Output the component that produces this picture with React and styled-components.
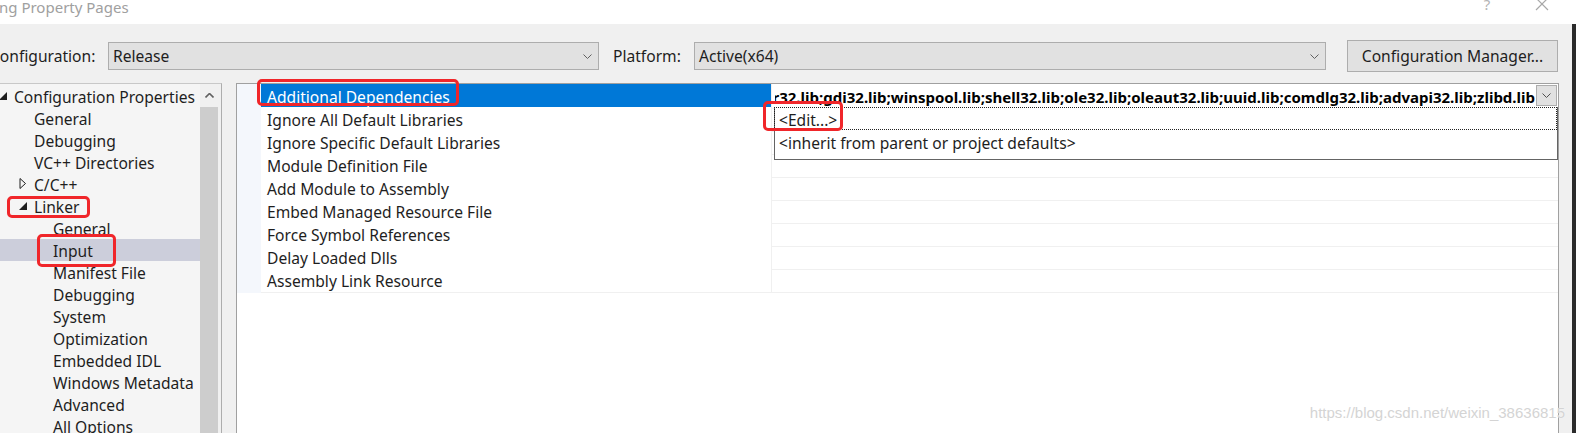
import React from 'react'
import styled, { createGlobalStyle } from 'styled-components'

const GlobalStyle = createGlobalStyle`
  html, body {
    margin: 0;
    padding: 0;
    background: #f0f0f0;
  }
  body {
    font-family: "Noto Sans", "Segoe UI", sans-serif;
  }
  * {
    box-sizing: border-box;
  }
`

const Window = styled.div`
  position: relative;
  width: 1576px;
  height: 433px;
  overflow: hidden;
  display: flex;
  flex-direction: column;
  background: #f0f0f0;
  color: #1e1e1e;
  font-size: 15.6px;
`

const TitleBar = styled.div`
  height: 24px;
  flex-shrink: 0;
  display: flex;
  align-items: flex-start;
  background: #fff;
  color: #a0a0a0;
`

const Title = styled.div`
  flex: 1;
  margin: -2px 0 0 -1px;
  font-size: 15px;
  line-height: 18px;
`

const HelpGlyph = styled.div`
  width: 14px;
  margin: -4px 41px 0 0;
  font-size: 15px;
  line-height: 16px;
  text-align: center;
  color: #b4b4b4;
`

const CloseGlyph = styled.svg`
  margin: -3px 27px 0 0;
`

const Body = styled.div`
  flex: 1;
  display: flex;
  flex-direction: column;
  border-right: 4px solid #2b2b2b;
  min-height: 0;
`

const ConfigRow = styled.div`
  height: 32px;
  margin-top: 16px;
  display: flex;
  align-items: center;
  flex-shrink: 0;
`

const Label = styled.div`
  width: ${p => p.$w}px;
  margin-left: ${p => p.$ml}px;
  line-height: 20px;
`

const Select = styled.div`
  width: ${p => p.$w}px;
  height: 28px;
  display: flex;
  align-items: center;
  justify-content: space-between;
  padding: 0 6px 0 4px;
  background: #e1e1e1;
  border: 1px solid #adadad;
`

const Button = styled.div`
  width: 211px;
  height: 32px;
  margin-left: 21px;
  display: flex;
  align-items: center;
  justify-content: center;
  background: #e1e1e1;
  border: 1px solid #adadad;
`

const Main = styled.div`
  height: 362px;
  margin-top: 11px;
  display: flex;
  flex-shrink: 0;
`

const TreePanel = styled.div`
  width: 222px;
  display: flex;
  background: #f0f0f0;
  border-top: 1px solid #c8c8c8;
  border-right: 1px solid #adadad;
`

const TreeList = styled.div`
  width: 200px;
  padding-top: 1px;
  background: #f5f5f5;
`

const TreeRow = styled.div`
  position: relative;
  height: 22px;
  display: flex;
  align-items: center;
  padding-top: 2px;
  padding-left: ${p => p.$level * 19}px;
  background: ${p => (p.$selected ? '#cccedb' : 'transparent')};
  white-space: nowrap;
`

const Expander = styled.div`
  width: 15px;
  height: 20px;
  flex-shrink: 0;
  display: flex;
  align-items: center;
  margin-top: -3px;
  margin-left: ${p => (p.$root ? -1 : 0)}px;
`

const ScrollBar = styled.div`
  width: 19px;
  display: flex;
  flex-direction: column;
  background: #f0f0f0;
`

const ScrollArrow = styled.div`
  height: 23px;
  display: flex;
  align-items: center;
  justify-content: center;
`

const ScrollThumb = styled.div`
  flex: 1;
  margin: 0 1px 0 0;
  background: #cdcdcd;
`

const GridPanel = styled.div`
  width: 1323px;
  margin-left: 14px;
  background: #fff;
  border: 1px solid #a0a0a0;
`

const PropRow = styled.div`
  display: grid;
  grid-template-columns: 24px 510px 787px;
  height: 23px;
`

const MarginCell = styled.div`
  background: #f4f7fc;
`

const NameCell = styled.div`
  position: relative;
  display: flex;
  align-items: center;
  padding: 2px 0 0 6px;
  white-space: nowrap;
  background: ${p => (p.$selected ? '#0078d7' : '#fff')};
  color: ${p => (p.$selected ? '#fff' : '#1e1e1e')};
  border-bottom: 1px solid ${p => (p.$selected ? '#0078d7' : '#f0f0f0')};
`

const ValueCell = styled.div`
  position: relative;
  border-left: 1px solid #f0f0f0;
  border-bottom: 1px solid #f0f0f0;
`

const ValueField = styled.div`
  height: 22px;
  display: flex;
  align-items: center;
  padding: 1px 0 0 3px;
`

const ValueText = styled.div`
  flex: 1;
  overflow: hidden;
  display: flex;
  justify-content: flex-end;
  white-space: nowrap;
  font-size: 15px;
  font-weight: 700;
  color: #000;
  padding: 2px 1px 0 0;
`

const DropButton = styled.div`
  width: 21px;
  height: 21px;
  flex-shrink: 0;
  margin-right: 1px;
  display: flex;
  align-items: center;
  justify-content: center;
  background: #e1e1e1;
  border: 1px solid #adadad;
`

const DropList = styled.div`
  position: absolute;
  top: 23px;
  left: 2px;
  right: 0;
  height: 53px;
  background: #fff;
  border: 1px solid #646464;
  border-top: none;
  z-index: 2;
`

const DropItem = styled.div`
  position: relative;
  height: 23px;
  display: flex;
  align-items: center;
  padding: 2px 0 0 4px;
  color: #1e1e1e;
  border: 1px ${p => (p.$focused ? 'dotted #222' : 'solid transparent')};
  margin-left: -1px;
`

const RedMark = styled.span`
  position: absolute;
  left: ${p => p.$x}px;
  top: ${p => p.$y}px;
  width: ${p => p.$w}px;
  height: ${p => p.$h}px;
  border: 3px solid #f0262a;
  border-radius: 5px;
  pointer-events: none;
  z-index: 3;
`

const Watermark = styled.div`
  position: absolute;
  right: 11px;
  bottom: 12px;
  font-family: "Liberation Sans", Arial, sans-serif;
  font-size: 15px;
  color: #d4d4d4;
  text-shadow: 0 0 1px #fff;
  z-index: 4;
`

const Chevron = ({ up, color = '#606060' }) => (
  <svg width="9" height="5" viewBox="0 0 9 5">
    <polyline
      points={up ? '0.5,4.5 4.5,0.5 8.5,4.5' : '0.5,0.5 4.5,4.5 8.5,0.5'}
      fill="none"
      stroke={color}
      strokeWidth={up ? 1.6 : 1}
    />
  </svg>
)

const OpenTriangle = () => (
  <svg width="8" height="8" viewBox="0 0 8 8">
    <polygon points="8,0 8,8 0,8" fill="#1e1e1e" />
  </svg>
)

const ClosedTriangle = () => (
  <svg width="8" height="11" viewBox="0 0 8 11">
    <polygon points="1,0.5 6.5,5.5 1,10.5" fill="none" stroke="#1e1e1e" strokeWidth="1" />
  </svg>
)

const tree = [
  { label: 'Configuration Properties', level: 0, exp: 'open' },
  { label: 'General', level: 1 },
  { label: 'Debugging', level: 1 },
  { label: 'VC++ Directories', level: 1 },
  { label: 'C/C++', level: 1, exp: 'closed' },
  { label: 'Linker', level: 1, exp: 'open', mark: { x: 7, y: 1, w: 83, h: 22 } },
  { label: 'General', level: 2 },
  { label: 'Input', level: 2, selected: true, mark: { x: 37, y: -5, w: 79, h: 33 } },
  { label: 'Manifest File', level: 2 },
  { label: 'Debugging', level: 2 },
  { label: 'System', level: 2 },
  { label: 'Optimization', level: 2 },
  { label: 'Embedded IDL', level: 2 },
  { label: 'Windows Metadata', level: 2 },
  { label: 'Advanced', level: 2 },
  { label: 'All Options', level: 2 },
]

const props = [
  'Additional Dependencies',
  'Ignore All Default Libraries',
  'Ignore Specific Default Libraries',
  'Module Definition File',
  'Add Module to Assembly',
  'Embed Managed Resource File',
  'Force Symbol References',
  'Delay Loaded Dlls',
  'Assembly Link Resource',
]

const deps =
  'kernel32.lib;user32.lib;gdi32.lib;winspool.lib;shell32.lib;ole32.lib;oleaut32.lib;uuid.lib;comdlg32.lib;advapi32.lib;zlibd.lib'

const App = () => {
  return (
    <Window>
      <GlobalStyle />
      <TitleBar>
        <Title>ng Property Pages</Title>
        <HelpGlyph>?</HelpGlyph>
        <CloseGlyph width="14" height="14" viewBox="0 0 14 14">
          <path d="M1 1 L13 13 M13 1 L1 13" stroke="#a8a8a8" strokeWidth="1.2" />
        </CloseGlyph>
      </TitleBar>

      <Body>
        <ConfigRow>
          <Label $w={118} $ml={-10}>Configuration:</Label>
          <Select $w={491}>
            <span>Release</span>
            <Chevron />
          </Select>
          <Label $w={81} $ml={14}>Platform:</Label>
          <Select $w={632}>
            <span>Active(x64)</span>
            <Chevron />
          </Select>
          <Button>Configuration Manager...</Button>
        </ConfigRow>

        <Main>
          <TreePanel>
            <TreeList>
              {tree.map((item, i) => (
                <TreeRow key={i} $level={item.level} $selected={item.selected}>
                  <Expander $root={item.level === 0}>
                    {item.exp === 'open' && <OpenTriangle />}
                    {item.exp === 'closed' && <ClosedTriangle />}
                  </Expander>
                  {item.label}
                  {item.mark && (
                    <RedMark $x={item.mark.x} $y={item.mark.y} $w={item.mark.w} $h={item.mark.h} />
                  )}
                </TreeRow>
              ))}
            </TreeList>
            <ScrollBar>
              <ScrollArrow>
                <Chevron up />
              </ScrollArrow>
              <ScrollThumb />
            </ScrollBar>
          </TreePanel>

          <GridPanel>
            {props.map((name, i) => (
              <PropRow key={name}>
                <MarginCell />
                <NameCell $selected={i === 0}>
                  {name}
                  {i === 0 && <RedMark $x={-4} $y={-5} $w={202} $h={27} />}
                </NameCell>
                <ValueCell>
                  {i === 0 && (
                    <>
                      <ValueField>
                        <ValueText>{deps}</ValueText>
                        <DropButton>
                          <Chevron color="#505050" />
                        </DropButton>
                      </ValueField>
                      <DropList>
                        <DropItem $focused>
                          {'<Edit...>'}
                          <RedMark $x={-12} $y={-7} $w={80} $h={30} />
                        </DropItem>
                        <DropItem>{'<inherit from parent or project defaults>'}</DropItem>
                      </DropList>
                    </>
                  )}
                </ValueCell>
              </PropRow>
            ))}
          </GridPanel>
        </Main>
      </Body>

      <Watermark>https://blog.csdn.net/weixin_38636815</Watermark>
    </Window>
  )
}

export default App
